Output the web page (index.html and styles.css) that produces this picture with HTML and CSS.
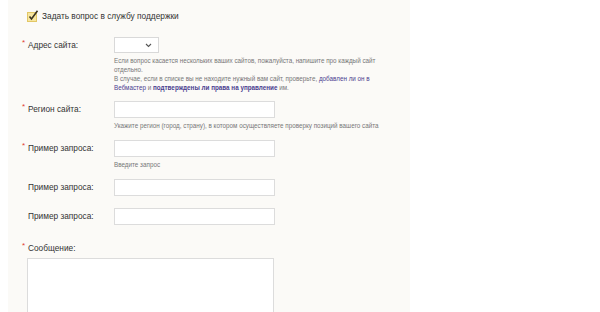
FILE: index.html
```html
<!DOCTYPE html>
<html lang="ru">

<head>
    <meta charset="UTF-8">
    <meta name="viewport" content="width=device-width, initial-scale=1.0">
    <title>Служба поддержки</title>
    <link rel="stylesheet" href="styles.css">
</head>

<body>
    <div class="panel">
        <label class="ask">
            <svg class="check" width="12" height="12" viewBox="0 0 12 12">
                <rect x="0.5" y="2.5" width="9" height="9" fill="#f7e6a0" stroke="#e2c766"/>
                <path d="M2.5 6.5 L4.5 9 L10.5 0.8" fill="none" stroke="#3a3320" stroke-width="1.6"/>
            </svg>
            Задать вопрос в службу поддержки
        </label>

        <div class="row row-site">
            <div class="label"><span class="req">*</span>Адрес сайта:</div>
            <div class="field">
                <div class="select">
                    <svg width="7" height="5" viewBox="0 0 7 5">
                        <path d="M1 1 L3.5 3.5 L6 1" fill="none" stroke="#555" stroke-width="1.1"/>
                    </svg>
                </div>
                <p class="hint">Если вопрос касается нескольких ваших сайтов, пожалуйста, напишите про каждый сайт отдельно.<br>
                    В случае, если в списке вы не находите нужный вам сайт, проверьте, <a href="#">добавлен ли он в</a><br><a href="#">Вебмастер</a> и <a href="#" class="strong">подтверждены ли права на управление</a> им.</p>
            </div>
        </div>

        <div class="row row-region">
            <div class="label"><span class="req">*</span>Регион сайта:</div>
            <div class="field">
                <input type="text" class="text">
                <p class="hint">Укажите регион (город, страну), в котором осуществляете проверку позиций вашего сайта</p>
            </div>
        </div>

        <div class="row row-query">
            <div class="label"><span class="req">*</span>Пример запроса:</div>
            <div class="field">
                <input type="text" class="text">
                <p class="hint">Введите запрос</p>
            </div>
        </div>

        <div class="row row-query2">
            <div class="label"><span class="req"></span>Пример запроса:</div>
            <div class="field">
                <input type="text" class="text">
            </div>
        </div>

        <div class="row row-query3">
            <div class="label"><span class="req"></span>Пример запроса:</div>
            <div class="field">
                <input type="text" class="text">
            </div>
        </div>

        <div class="message">
            <div class="label"><span class="req">*</span>Сообщение:</div>
            <textarea class="area"></textarea>
        </div>
    </div>
</body>

</html>
```

FILE: styles.css
```css
/* styles.css */
body {
    margin: 0;
    font-family: "Liberation Sans", Arial, sans-serif;
    background-color: #fff;
    overflow: hidden;
}

.panel {
    margin-left: 8px;
    width: 402px;
    height: 312px;
    overflow: hidden;
    background-color: #fbfaf7;
    padding: 9px 0 0 14px;
    box-sizing: border-box;
}

.ask {
    display: flex;
    align-items: center;
    gap: 3px;
    margin-left: 5px;
    font-size: 8.3px;
    color: #333;
    height: 14px;
}

.check {
    display: block;
}

.row {
    display: grid;
    grid-template-columns: 92px 1fr;
}

.row-site {
    margin-top: 14px;
}

.row-region {
    margin-top: 9px;
}

.row-query {
    margin-top: 10px;
}

.row-query2 {
    margin-top: 10px;
}

.row-query3 {
    margin-top: 12px;
}

.label {
    font-size: 8.3px;
    color: #333;
    line-height: 17px;
}

.req {
    display: inline-block;
    width: 6px;
    color: #e03c31;
    font-size: 8px;
    vertical-align: top;
    line-height: 12px;
}

.select {
    width: 45px;
    height: 16px;
    box-sizing: border-box;
    background: #fff;
    border: 1px solid #d9d9d9;
    display: flex;
    align-items: center;
    justify-content: flex-end;
    padding-right: 6px;
}

.select svg {
    display: block;
}

.text {
    display: block;
    width: 161px;
    height: 17px;
    box-sizing: border-box;
    margin: 0;
    border: 1px solid #dcdcdc;
    background: #fff;
    padding: 0;
}

.hint {
    margin: 3px 0 0;
    font-size: 6.3px;
    line-height: 9px;
    color: #777;
    width: 275px;
}

.hint a {
    color: #4a3d8f;
    text-decoration: none;
}

.hint a.strong {
    font-weight: bold;
}

.message {
    margin-top: 15px;
}

.area {
    display: block;
    margin: 1px 0 0 5px;
    width: 247px;
    height: 80px;
    box-sizing: border-box;
    border: 1px solid #dcdcdc;
    background: #fff;
    resize: none;
}
```
